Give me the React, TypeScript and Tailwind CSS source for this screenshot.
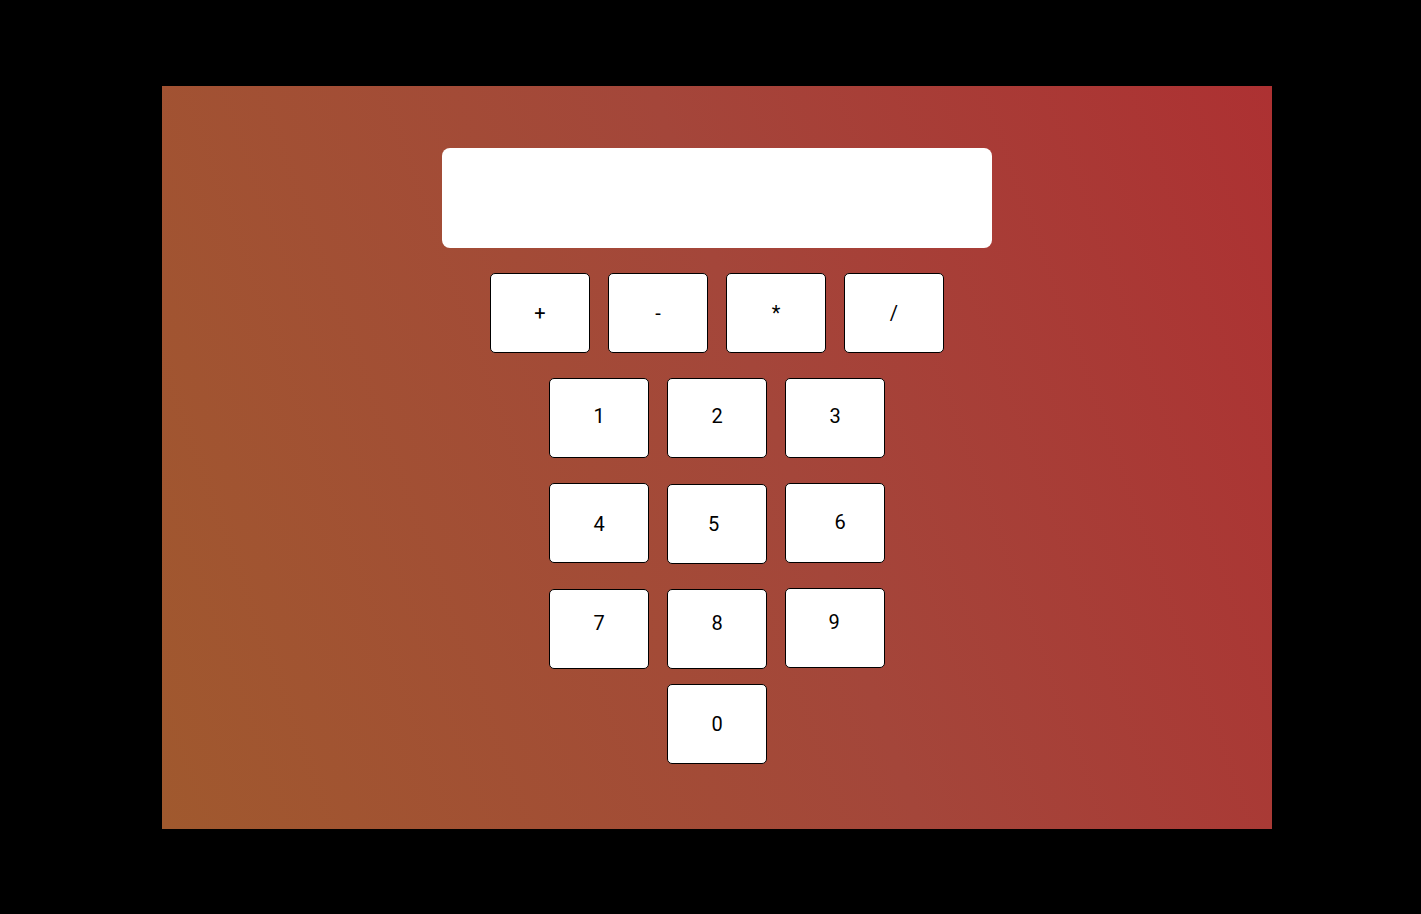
const ops = ["+", "-", "*", "/"];

// per-key nudges so glyphs sit where the reference has them
const rows: { label: string; cls: string; btn?: string }[][] = [
  [
    { label: "1", cls: "pb-[4px]" },
    { label: "2", cls: "pb-[4px]" },
    { label: "3", cls: "pb-[4px]" },
  ],
  [
    { label: "4", cls: "pt-[1px]" },
    { label: "5", cls: "pr-[7px]", btn: "mt-[1px]" },
    { label: "6", cls: "pl-[10px] pb-[2px]" },
  ],
  [
    { label: "7", cls: "pb-[13px]" },
    { label: "8", cls: "pb-[13px]" },
    { label: "9", cls: "pb-[13px] pr-[2px]", btn: "-mt-[1px]" },
  ],
];

function Key({ label, cls = "", btn = "" }: { label: string; cls?: string; btn?: string }) {
  return (
    <button
      type="button"
      className={`flex h-[80px] w-[100px] items-center justify-center rounded-[5px] border border-black bg-white text-[20px] leading-none text-black ${cls} ${btn}`}
      style={{ fontFamily: "Roboto, 'Liberation Sans', sans-serif" }}
    >
      {label}
    </button>
  );
}

export default function App() {
  return (
    <div className="min-h-[914px] w-full bg-black pl-[162px] pt-[86px]">
      <div className="flex h-[743px] w-[1110px] flex-col items-center bg-[linear-gradient(70deg,#a0592e_0%,#a4463a_55%,#ad3132_100%)] pt-[62px]">
        <div className="h-[100px] w-[550px] rounded-[8px] bg-white" />

        <div className="mt-[25px] flex gap-[18px]">
          {ops.map((o) => (
            <Key key={o} label={o} cls="pb-[1px]" />
          ))}
        </div>

        <div className="mt-[25px] flex flex-col gap-[25px]">
          {rows.map((row, i) => (
            <div key={i} className="flex items-start gap-[18px]">
              {row.map((k) => (
                <Key key={k.label} label={k.label} cls={k.cls} btn={k.btn} />
              ))}
            </div>
          ))}
        </div>

        <div className="mt-[15px]">
          <Key label="0" />
        </div>
      </div>
    </div>
  );
}
